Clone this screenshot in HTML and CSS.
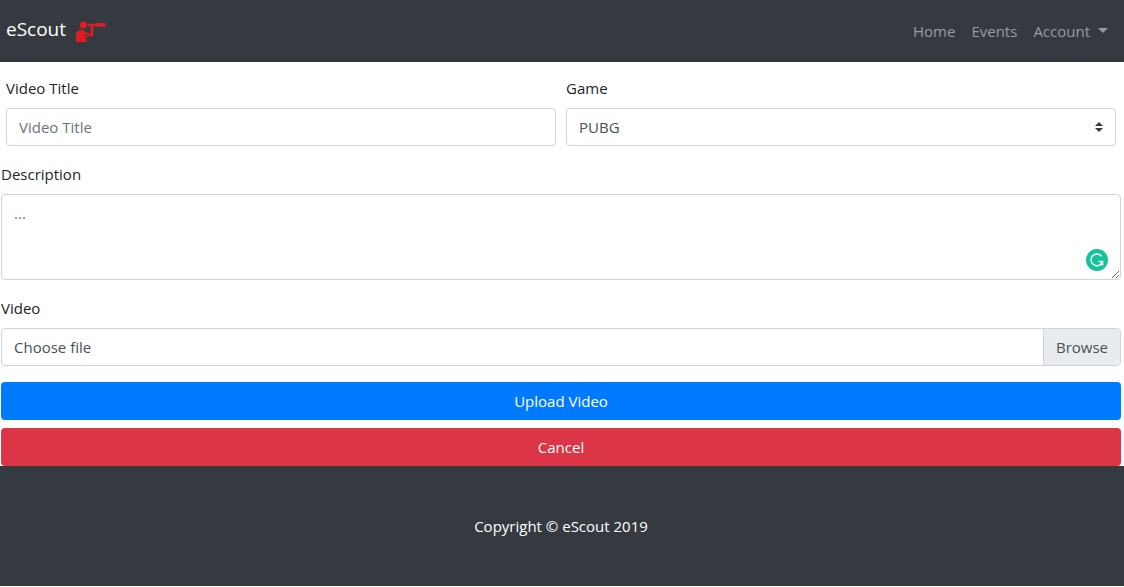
FILE: index.html
```html
<!DOCTYPE html>
<html lang="en">
<head>
<meta charset="utf-8">
<meta name="viewport" content="width=device-width, initial-scale=1">
<title>eScout - Upload Video</title>
<link rel="stylesheet" href="styles.css">
</head>
<body>
<nav class="navbar">
  <a class="brand" href="#">eScout
    <svg class="brand-icon" viewBox="0 0 30 22" aria-hidden="true">
      <circle cx="7.4" cy="4" r="3.5"/>
      <path d="M11.4 3.2L13 2.7H20.4V1.9H29.4V5.8H20.4V5H17.2V14.6Q17 16 15.6 15.6L7.6 13L8.6 10.8L14.6 13V5.2L12 5Z"/>
      <path d="M0 21V14.2Q.4 9.6 4.6 8.8Q7.6 8.3 9 10.4L10 12L7.6 14L12.6 15.8L9.4 17.4L11.2 21Z"/>
    </svg>
  </a>
  <div class="nav-links">
    <a class="nav-link" href="#">Home</a>
    <a class="nav-link" href="#">Events</a>
    <a class="nav-link dropdown" href="#">Account</a>
  </div>
</nav>
<main>
  <form class="upload-form">
    <div class="form-row">
      <div class="form-group">
        <label for="title">Video Title</label>
        <input class="control" id="title" type="text" placeholder="Video Title">
      </div>
      <div class="form-group">
        <label for="game">Game</label>
        <div class="field">
          <select class="control" id="game"><option>PUBG</option></select>
          <svg class="select-arrows" viewBox="0 0 8 10" aria-hidden="true"><path d="M4 0L0 4H8ZM0 6H8L4 10Z"/></svg>
        </div>
      </div>
    </div>
    <div class="form-group">
      <label for="description">Description</label>
      <div class="field">
        <textarea class="control" id="description" rows="3" placeholder="..."></textarea>
        <svg class="checker" viewBox="0 0 22 22" aria-hidden="true">
          <circle cx="11" cy="11" r="11" fill="#15c39a"/>
          <path d="M15.6 7.2A5.9 5.9 0 1 0 16.3 13.4M12.4 12.5H16.5V16.4" fill="none" stroke="#fff" stroke-width="1.5"/>
        </svg>
      </div>
    </div>
    <div class="form-group">
      <label for="video">Video</label>
      <div class="field">
        <div class="file-face" aria-hidden="true"><span class="file-name">Choose file</span><span class="file-browse">Browse</span></div>
        <input class="file-input" id="video" type="file">
      </div>
    </div>
    <div class="actions">
      <button class="btn btn-primary" type="submit">Upload Video</button>
      <button class="btn btn-danger" type="button">Cancel</button>
    </div>
  </form>
</main>
<footer class="footer">Copyright © eScout 2019</footer>
</body>
</html>
```
FILE: styles.css
```css
*, *::before, *::after { box-sizing: border-box; }
body {
  margin: 0;
  background: #fff;
  color: #212529;
  font: 15px/24px "Segoe UI", "Open Sans", "Noto Sans", sans-serif;
}
.navbar {
  display: flex;
  align-items: center;
  justify-content: space-between;
  padding: 8px 8px 8px 6px;
  min-height: 62px;
  background: #343a40;
  border-bottom: 1px solid #2e3338;
}
.brand {
  display: flex;
  align-items: center;
  gap: 10px;
  padding-bottom: 4px;
  color: #fff;
  font-size: 19px;
  line-height: 30px;
  text-decoration: none;
}
.brand-icon {
  width: 30px;
  height: 22px;
  margin-top: 6px;
  fill: #e31b23;
}
.nav-links { display: flex; }
.nav-link {
  padding: 8px;
  color: #999c9f;
  text-decoration: none;
}
.dropdown::after {
  content: "";
  display: inline-block;
  margin-left: 8px;
  vertical-align: 4px;
  border-top: 5px solid;
  border-right: 5px solid transparent;
  border-left: 5px solid transparent;
}
.upload-form { padding: 14px 3px 0 1px; }
.form-row {
  display: grid;
  grid-template-columns: 1fr 1fr;
  gap: 10px;
  padding: 0 5px;
}
.form-group { margin-bottom: 16px; }
label {
  display: block;
  margin-bottom: 8px;
}
.field { position: relative; }
.control {
  display: block;
  width: 100%;
  height: 38px;
  padding: 6px 12px;
  border: 1px solid #ced4da;
  border-radius: 4px;
  background: #fff;
  color: #495057;
  font: inherit;
  appearance: none;
}
.control::placeholder { color: #6c757d; opacity: 1; }
textarea.control {
  height: auto;
  overflow: auto;
  resize: vertical;
}
.select-arrows {
  position: absolute;
  top: 14px;
  right: 13px;
  width: 8px;
  height: 10px;
  fill: #343a40;
  pointer-events: none;
}
.checker {
  position: absolute;
  right: 13px;
  bottom: 9px;
  width: 22px;
  height: 22px;
}
.file-face {
  display: flex;
  overflow: hidden;
  border: 1px solid #ced4da;
  border-radius: 4px;
  color: #495057;
}
.file-name {
  flex: 1;
  padding: 6px 12px;
}
.file-browse {
  padding: 6px 12px;
  border-left: 1px solid #ced4da;
  background: #e9ecef;
}
.file-input {
  position: absolute;
  inset: 0;
  width: 100%;
  opacity: 0;
}
.actions {
  display: grid;
  gap: 8px;
}
.btn {
  padding: 7px 12px;
  border: 0;
  border-radius: 4px;
  color: #fff;
  font: inherit;
}
.btn-primary { background: #007bff; }
.btn-danger { background: #dc3545; }
.footer {
  padding: 48px 3px 48px 1px;
  background: #343a40;
  color: #fff;
  text-align: center;
}
```
